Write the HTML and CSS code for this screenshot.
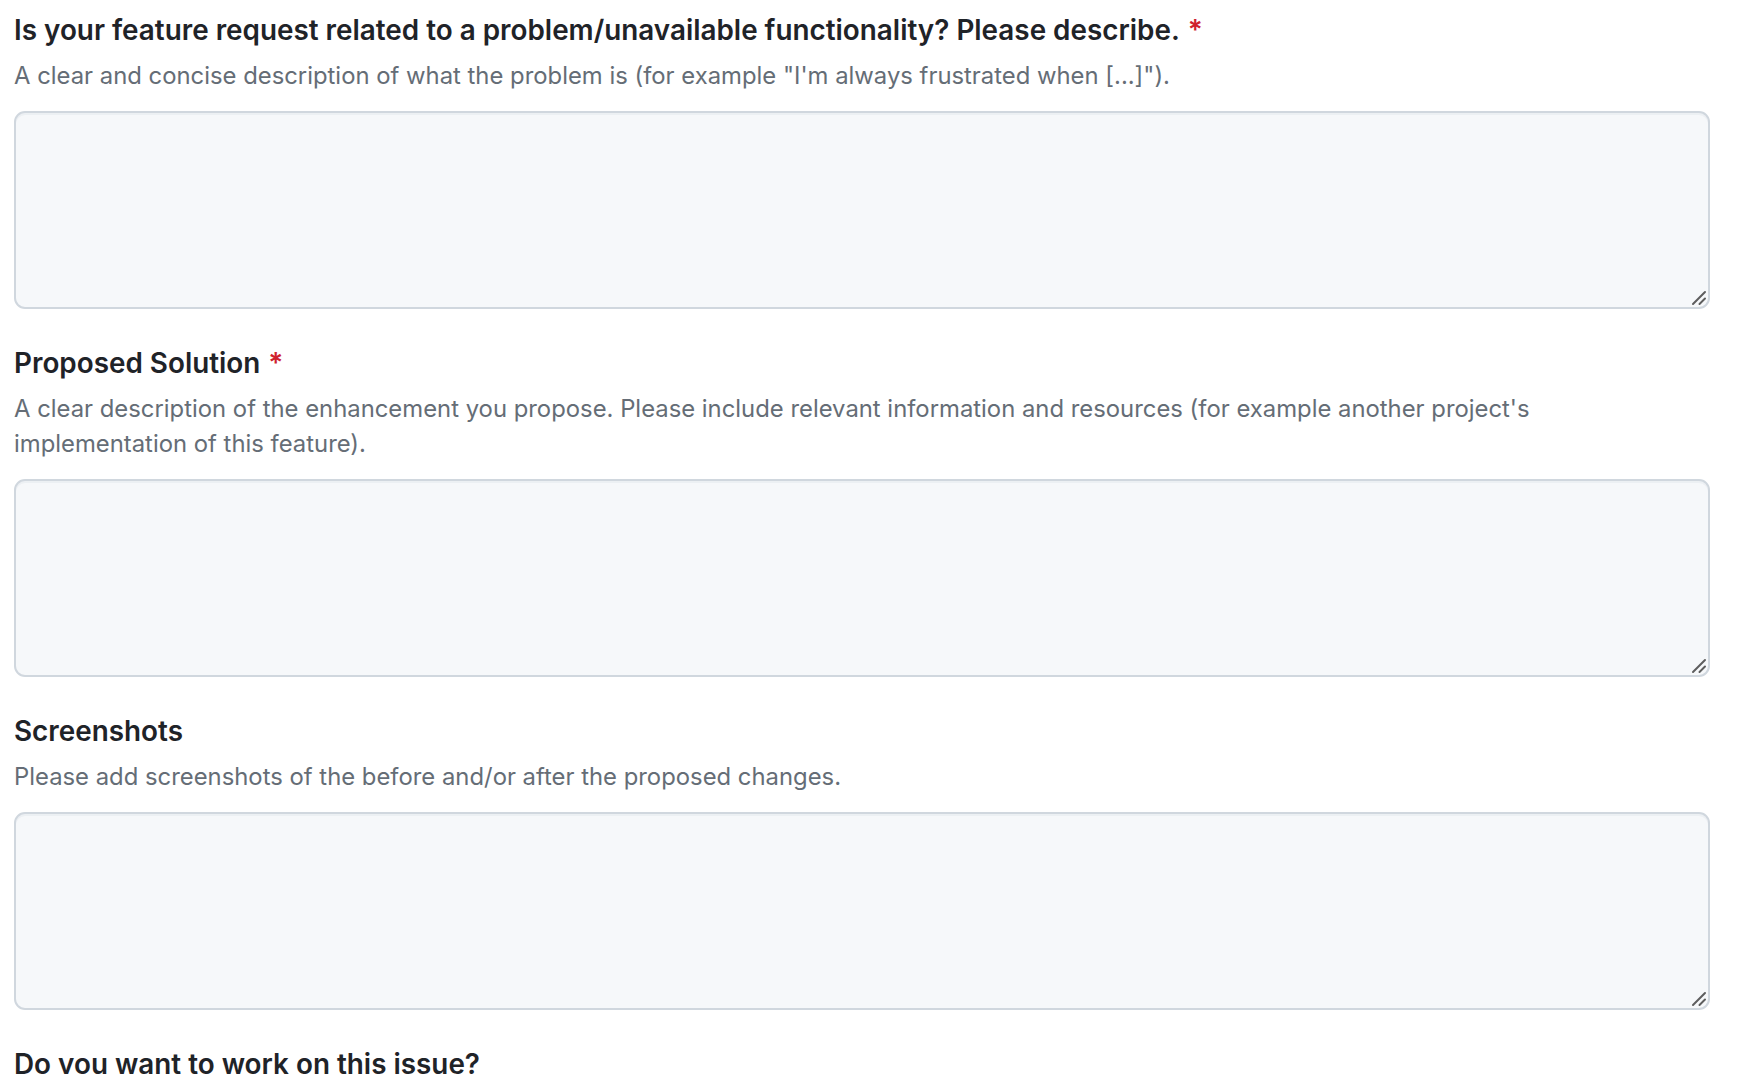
FILE: index.html
```html
<!DOCTYPE html>
<html lang="en">
<head>
<meta charset="utf-8">
<title>Feature request</title>
<link rel="stylesheet" href="styles.css">
</head>
<body>
<form class="issue-form">
  <div class="form-group">
    <h3 class="field-label">Is your feature request related to a problem/unavailable functionality? Please describe.<span class="required">*</span></h3>
    <p class="field-desc">A clear and concise description of what the problem is (for example "I'm always frustrated when [...]").</p>
    <div class="input-wrap">
      <textarea class="field-input"></textarea>
      <svg class="grip" width="16" height="16" viewBox="0 0 16 16" aria-hidden="true"><path d="M2 14 L14 2 M8.5 14 L14 8.5" stroke="#5e5e5e" stroke-width="2" stroke-linecap="round" fill="none"/></svg>
    </div>
  </div>
  <div class="form-group">
    <h3 class="field-label">Proposed Solution<span class="required">*</span></h3>
    <p class="field-desc">A clear description of the enhancement you propose. Please include relevant information and resources (for example another project's implementation of this feature).</p>
    <div class="input-wrap">
      <textarea class="field-input"></textarea>
      <svg class="grip" width="16" height="16" viewBox="0 0 16 16" aria-hidden="true"><path d="M2 14 L14 2 M8.5 14 L14 8.5" stroke="#5e5e5e" stroke-width="2" stroke-linecap="round" fill="none"/></svg>
    </div>
  </div>
  <div class="form-group">
    <h3 class="field-label">Screenshots</h3>
    <p class="field-desc">Please add screenshots of the before and/or after the proposed changes.</p>
    <div class="input-wrap">
      <textarea class="field-input"></textarea>
      <svg class="grip" width="16" height="16" viewBox="0 0 16 16" aria-hidden="true"><path d="M2 14 L14 2 M8.5 14 L14 8.5" stroke="#5e5e5e" stroke-width="2" stroke-linecap="round" fill="none"/></svg>
    </div>
  </div>
  <div class="form-group">
    <h3 class="field-label">Do you want to work on this issue?</h3>
  </div>
</form>
</body>
</html>
```
FILE: styles.css
```css
html, body {
  margin: 0;
  padding: 0;
  background: #ffffff;
}
body {
  font-family: Inter, "Noto Sans", "Liberation Sans", sans-serif;
  color: #1f2328;
  overflow: hidden;
}
.issue-form {
  padding: 12px 27px 0 14px;
  display: flex;
  flex-direction: column;
  gap: 36px;
}
.form-group {
  display: flex;
  flex-direction: column;
}
.field-label {
  margin: 0;
  font-size: 27.85px;
  line-height: 36px;
  font-weight: 600;
  color: #1f2328;
}
.required {
  color: #cf222e;
  margin-left: 8px;
}
.field-desc {
  margin: 10px 0 18px;
  max-width: 1600px;
  font-size: 23.85px;
  line-height: 35px;
  color: #656d76;
}
.input-wrap {
  position: relative;
}
.field-input {
  display: block;
  box-sizing: border-box;
  width: 100%;
  height: 198px;
  margin: 0;
  padding: 14px 20px;
  background: #f6f8fa;
  border: 2px solid #d0d7de;
  border-radius: 11px;
  box-shadow: inset 0 2px 0 rgba(208, 215, 222, 0.25);
  resize: none;
  font: inherit;
  outline: none;
}
.grip {
  position: absolute;
  right: 3px;
  bottom: 3px;
  pointer-events: none;
}
```
